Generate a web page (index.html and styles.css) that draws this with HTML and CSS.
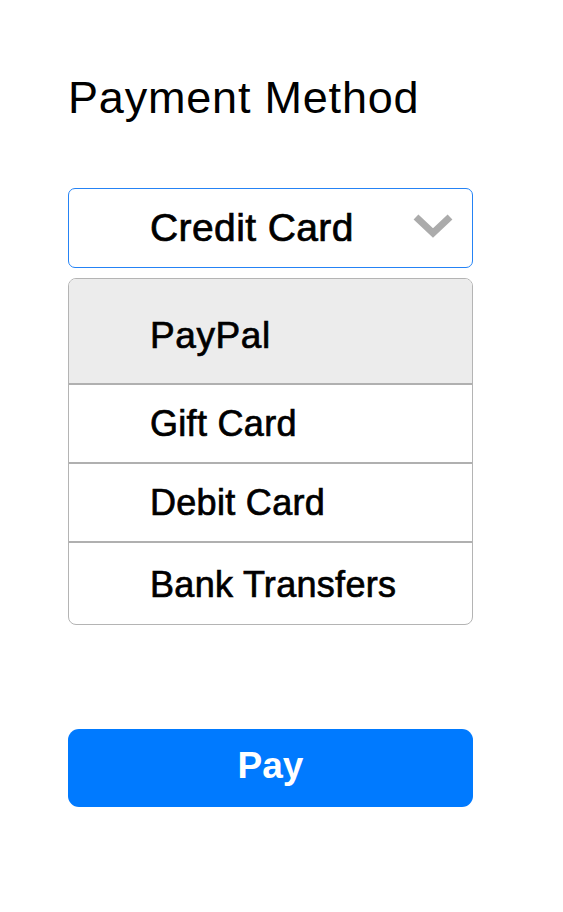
FILE: index.html
```html
<!DOCTYPE html>
<html>
<head>
<meta charset="utf-8">
<link rel="stylesheet" href="styles.css">
</head>
<body>
<main class="page">
  <h1 class="title">Payment Method</h1>
  <div class="select">
    <span class="select-value">Credit Card</span>
    <svg class="chevron" width="40" height="24" viewBox="0 0 40 24">
      <polyline points="3,3 20,19 37,3" fill="none" stroke="#ababab" stroke-width="7" stroke-linejoin="miter"/>
    </svg>
  </div>
  <ul class="options">
    <li class="option option-active option-first">PayPal</li>
    <li class="option">Gift Card</li>
    <li class="option">Debit Card</li>
    <li class="option option-last">Bank Transfers</li>
  </ul>
  <button class="pay">Pay</button>
</main>
</body>
</html>
```

FILE: styles.css
```css
html, body {
  margin: 0;
  padding: 0;
  background: #ffffff;
}
.page {
  width: 405px;
  padding: 72px 0 0 68px;
  font-family: "Liberation Sans", Arial, sans-serif;
  color: #000;
  display: flex;
  flex-direction: column;
}
.title {
  margin: 0;
  font-size: 45px;
  font-weight: 400;
  line-height: 52px;
  letter-spacing: 0.8px;
  height: 52px;
}
.select {
  margin-top: 64px;
  box-sizing: border-box;
  height: 80px;
  border: 1.5px solid #2583f5;
  border-radius: 7px;
  display: flex;
  align-items: center;
  padding-left: 81px;
  padding-right: 19px;
  justify-content: space-between;
}
.select-value {
  font-size: 39px;
  -webkit-text-stroke: 0.7px #000;
  letter-spacing: 0.4px;
}
.chevron {
  display: block;
  margin-top: -4px;
}
.options {
  list-style: none;
  margin: 10px 0 0 0;
  padding: 0;
  border: 1.5px solid #b4b4b4;
  border-radius: 8px;
  overflow: hidden;
}
.option {
  box-sizing: border-box;
  height: 79px;
  display: flex;
  align-items: center;
  padding-left: 81px;
  font-size: 36px;
  -webkit-text-stroke: 0.7px #000;
  letter-spacing: 0.3px;
  border-top: 2px solid #b0b0b0;
}
.option-first {
  border-top: none;
  height: 104px;
  font-size: 37px;
  padding-top: 9px;
  letter-spacing: 0.6px;
}
.option-active {
  background: #ececec;
}
.option-last {
  height: 83px;
  padding-top: 2px;
}
.pay {
  margin-top: 104px;
  height: 78px;
  border: none;
  border-radius: 11px;
  background: #007aff;
  color: #fff;
  font-family: "Liberation Sans", Arial, sans-serif;
  font-weight: 700;
  font-size: 37px;
  padding: 0;
  padding-bottom: 4px;
}
```
